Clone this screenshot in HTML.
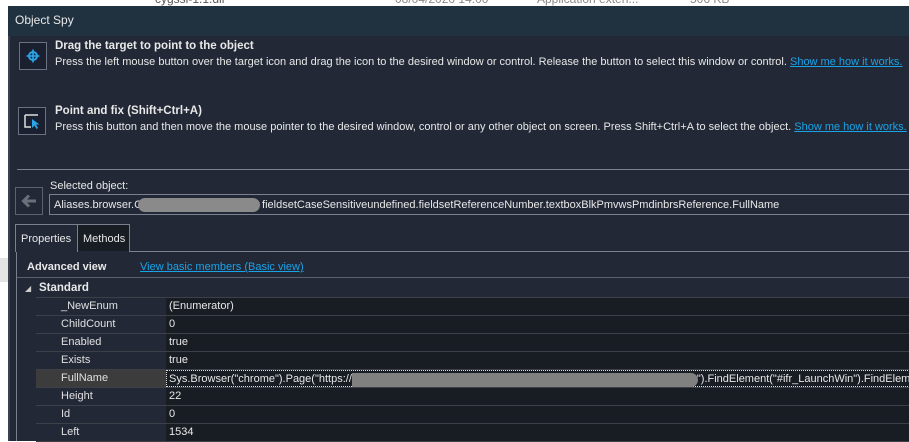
<!DOCTYPE html>
<html><head><style>
*{margin:0;padding:0;box-sizing:border-box}
body{width:909px;height:441px;overflow:hidden;background:#fff;font-family:"Liberation Sans",sans-serif;font-size:11px;color:#e8e8e8;position:relative}
.a{position:absolute;white-space:nowrap}
.lnk{color:#1aa3e8;text-decoration:underline}
.row{position:absolute;left:36px;width:873px;height:18px;border-bottom:1px solid #3d4048;white-space:nowrap;overflow:hidden}
.row .n{position:absolute;left:0;width:130px;height:17px;padding-left:25px;line-height:17px;color:#e0e0e0}
.row .v{position:absolute;left:130px;width:760px;height:17px;background:#181d24;padding-left:3px;line-height:16px;white-space:nowrap;overflow:hidden}
</style></head><body>
<div class="a" style="left:0;top:0;width:909px;height:6px;background:#fff;overflow:hidden">
<span class="a" style="left:155px;top:-8px;color:#555;font-size:12px">cygssl-1.1.dll</span>
<span class="a" style="left:395px;top:-8px;color:#888;font-size:12px">08/04/2020 14:00</span>
<span class="a" style="left:537px;top:-8px;color:#888;font-size:12px">Application exten...</span>
<span class="a" style="left:690px;top:-8px;color:#888;font-size:12px">506 KB</span>
</div>
<div class="a" style="left:0;top:258px;width:9px;height:24px;background:#e4e4e4"></div>
<div class="a" style="left:8px;top:6px;width:901px;height:435px;background:#222836;border-left:2px solid #3a404c"></div>
<div class="a" style="left:8px;top:6px;width:901px;height:30px;background:#203140"></div>
<div class="a" style="left:15px;top:13px;font-size:12px;color:#e8e8e8">Object Spy</div>

<div class="a" style="left:19px;top:42px;width:28px;height:28px;border:1px solid #6a7180;background:#1a2030"></div>
<svg class="a" style="left:25px;top:48px" width="16" height="16" viewBox="0 0 16 16"><circle cx="8" cy="8" r="5" fill="#2aa5ea"/><circle cx="8" cy="8" r="3" fill="#1a2030"/><path d="M8 1.5v13M1.5 8h13" stroke="#2aa5ea" stroke-width="1.6"/><circle cx="8" cy="8" r="1.3" fill="#2aa5ea"/></svg>
<div class="a" style="left:55px;top:40px;font-weight:bold;font-size:11.5px">Drag the target to point to the object</div>
<div class="a" style="left:55px;top:56px">Press the left mouse button over the target icon and drag the icon to the desired window or control. Release the button to select this window or control. <span class="lnk">Show me how it works.</span></div>

<div class="a" style="left:18px;top:107px;width:28px;height:28px;border:1px solid #6a7180;background:#1a2030"></div>
<svg class="a" style="left:23px;top:112px" width="18" height="18" viewBox="0 0 18 18"><path d="M2 3h13M2 3v12h6" stroke="#ddd" stroke-width="1.5" fill="none"/><path d="M9 7l0 9 2.5-2.5 2 3.5 1.5-1-2-3.5h3.5z" fill="#2aa5ea"/></svg>
<div class="a" style="left:55px;top:105px;font-weight:bold;font-size:11.5px">Point and fix (Shift+Ctrl+A)</div>
<div class="a" style="left:55px;top:121px">Press this button and then move the mouse pointer to the desired window, control or any other object on screen. Press Shift+Ctrl+A to select the object. <span class="lnk">Show me how it works.</span></div>

<div class="a" style="left:17px;top:169px;width:892px;height:1px;background:#7a8090"></div>
<div class="a" style="left:50px;top:180px">Selected object:</div>
<div class="a" style="left:15px;top:187px;width:28px;height:28px;border:1px solid #5c6270"></div>
<svg class="a" style="left:20px;top:193px" width="18" height="16" viewBox="0 0 18 16"><path d="M16 8H4M9 2.5L3.5 8 9 13.5" stroke="#6a707a" stroke-width="3" fill="none"/></svg>
<div class="a" style="left:49px;top:194px;width:860px;height:21px;border:1px solid #7a8090;border-right:none;padding:4px 0 0 4px">Aliases.browser.C<span style="display:inline-block;width:120px"></span>fieldsetCaseSensitiveundefined.fieldsetReferenceNumber.textboxBlkPmvwsPmdinbrsReference.FullName</div>
<div class="a" style="left:138px;top:198px;width:122px;height:14px;background:#8a8a8a;border-radius:7px"></div>

<div class="a" style="left:129px;top:251px;width:780px;height:1px;background:#7a8090"></div>
<div class="a" style="left:15px;top:224px;width:63px;height:28px;border:1px solid #7a8090;border-bottom:none;background:#222836;padding:8px 0 0 5px">Properties</div>
<div class="a" style="left:77px;top:224px;width:53px;height:27px;border:1px solid #7a8090;border-bottom:none;background:#181d24;padding:8px 0 0 5px">Methods</div>
<div class="a" style="left:16px;top:252px;width:1px;height:189px;background:#7a8090"></div>
<div class="a" style="left:27px;top:261px;font-weight:bold">Advanced view</div>
<div class="a lnk" style="left:140px;top:261px">View basic members (Basic view)</div>
<div class="a" style="left:17px;top:277px;width:892px;height:1px;background:#5a6070"></div>
<div class="a" style="left:25px;top:284px;font-size:8px;color:#ccc">◢</div>
<div class="a" style="left:39px;top:282px;font-weight:bold;font-size:11.5px">Standard</div>
<div class="a" style="left:36px;top:297px;width:873px;height:1px;background:#3d4048"></div>

<div class="row" style="top:298px"><div class="n">_NewEnum</div><div class="v">(Enumerator)</div></div>
<div class="row" style="top:316px"><div class="n">ChildCount</div><div class="v">0</div></div>
<div class="row" style="top:334px"><div class="n">Enabled</div><div class="v">true</div></div>
<div class="row" style="top:352px"><div class="n">Exists</div><div class="v">true</div></div>
<div class="row" style="top:370px"><div class="n" style="background:#3c3c3c">FullName</div><div class="v" style="border:1px dotted #ddd;padding-left:2px">Sys.Browser("chrome").Page("https://<span style="display:inline-block;width:345px"></span>").FindElement("#ifr_LaunchWin").FindElement</div></div>
<div class="a" style="left:352px;top:373px;width:346px;height:14px;background:#808080;border-radius:0 7px 7px 0"></div>
<div class="row" style="top:388px"><div class="n">Height</div><div class="v">22</div></div>
<div class="row" style="top:406px"><div class="n">Id</div><div class="v">0</div></div>
<div class="row" style="top:424px"><div class="n">Left</div><div class="v">1534</div></div>
</body></html>
